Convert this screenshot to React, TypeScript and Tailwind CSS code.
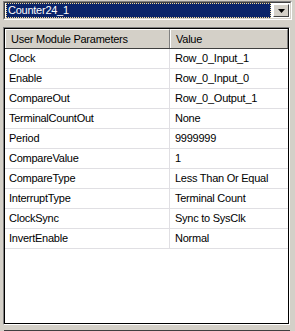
import React from 'react'

const rows: [string, string][] = [
  ['Clock', 'Row_0_Input_1'],
  ['Enable', 'Row_0_Input_0'],
  ['CompareOut', 'Row_0_Output_1'],
  ['TerminalCountOut', 'None'],
  ['Period', '9999999'],
  ['CompareValue', '1'],
  ['CompareType', 'Less Than Or Equal'],
  ['InterruptType', 'Terminal Count'],
  ['ClockSync', 'Sync to SysClk'],
  ['InvertEnable', 'Normal'],
]

export default function App() {
  return (
    <div className="w-[295px] h-[331px] bg-[#d4d0c8] overflow-hidden text-[11px] tracking-[-0.25px] text-black leading-none [font-family:'Liberation_Sans',Arial,sans-serif]">
      {/* combo box */}
      <div className="ml-[3px] mt-[1px] w-[289px] h-[19px] border border-t-[#808080] border-l-[#808080] border-b-white border-r-white">
        <div className="h-full flex items-center bg-white border border-t-[#404040] border-l-[#404040] border-b-[#d4d0c8] border-r-[#d4d0c8] pl-[1px] pr-[1px]">
          <div className="flex-1 h-[15px] bg-[#0a246a] border border-dotted border-[#f5db95] text-white flex items-center pl-[1px]">
            Counter24_1
          </div>
          <div className="ml-[2px] w-[16px] h-[13px] bg-[#d4d0c8] border border-t-white border-l-white border-b-[#404040] border-r-[#404040] flex items-center justify-center">
            <svg width="7" height="4" viewBox="0 0 7 4">
              <path d="M0 0h7L3.5 4z" fill="#000" />
            </svg>
          </div>
        </div>
      </div>

      {/* grid */}
      <div className="ml-[3px] mt-[7px] w-[287px] h-[298px] border border-t-[#808080] border-l-[#808080] border-b-white border-r-white">
        <div className="h-full bg-white border border-black flex flex-col">
          <div className="flex h-[20px] border-b border-b-[#404040] bg-[#d4d0c8]">
            <div className="w-[165px] flex items-center pl-[5px] border-t border-l border-t-white border-l-white border-r border-r-[#808080]">
              User Module Parameters
            </div>
            <div className="flex-1 flex items-center pl-[5px] border-t border-l border-t-white border-l-white border-r border-r-[#808080]">
              Value
            </div>
          </div>
          {rows.map(([k, v]) => (
            <div key={k} className="flex h-[20px] border-b border-b-[#e0dfe3]">
              <div className="w-[165px] flex items-center pl-[4px] border-r border-r-[#e0dfe3]">{k}</div>
              <div className="flex-1 flex items-center pl-[5px]">{v}</div>
            </div>
          ))}
        </div>
      </div>

      <div className="ml-[4px] mt-[5px] w-[286px] h-[4px] border-t border-l border-[#404040]" />
    </div>
  )
}
